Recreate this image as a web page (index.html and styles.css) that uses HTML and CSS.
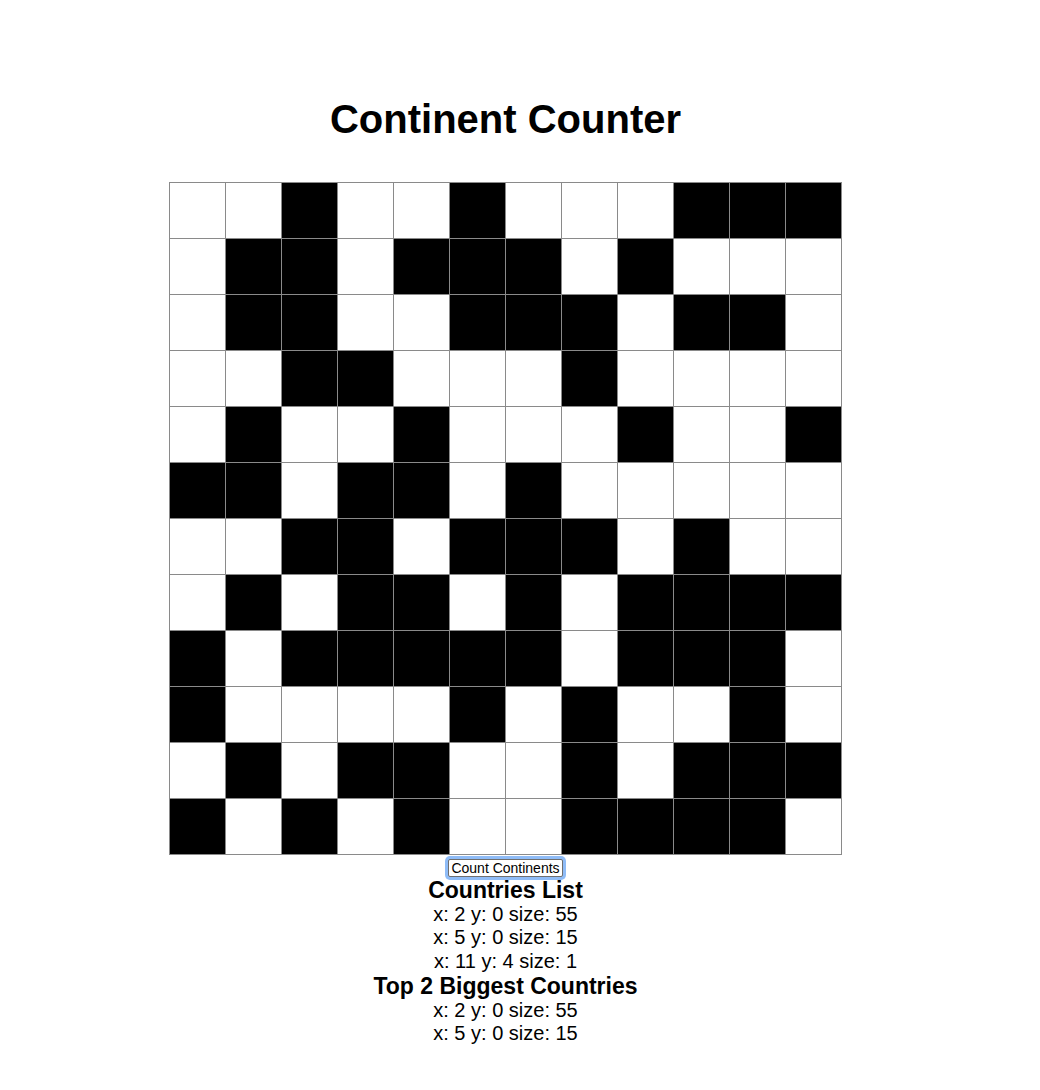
FILE: index.html
```html
<!DOCTYPE html>
<html>
<head>
<meta charset="utf-8">
<title>Continent Counter</title>
<link rel="stylesheet" href="styles.css">
</head>
<body>
<div class="page">
  <h1 class="title">Continent Counter</h1>
  <div class="board">
    <div class="cell"></div><div class="cell"></div><div class="cell on"></div><div class="cell"></div><div class="cell"></div><div class="cell on"></div><div class="cell"></div><div class="cell"></div><div class="cell"></div><div class="cell on"></div><div class="cell on"></div><div class="cell on"></div>
    <div class="cell"></div><div class="cell on"></div><div class="cell on"></div><div class="cell"></div><div class="cell on"></div><div class="cell on"></div><div class="cell on"></div><div class="cell"></div><div class="cell on"></div><div class="cell"></div><div class="cell"></div><div class="cell"></div>
    <div class="cell"></div><div class="cell on"></div><div class="cell on"></div><div class="cell"></div><div class="cell"></div><div class="cell on"></div><div class="cell on"></div><div class="cell on"></div><div class="cell"></div><div class="cell on"></div><div class="cell on"></div><div class="cell"></div>
    <div class="cell"></div><div class="cell"></div><div class="cell on"></div><div class="cell on"></div><div class="cell"></div><div class="cell"></div><div class="cell"></div><div class="cell on"></div><div class="cell"></div><div class="cell"></div><div class="cell"></div><div class="cell"></div>
    <div class="cell"></div><div class="cell on"></div><div class="cell"></div><div class="cell"></div><div class="cell on"></div><div class="cell"></div><div class="cell"></div><div class="cell"></div><div class="cell on"></div><div class="cell"></div><div class="cell"></div><div class="cell on"></div>
    <div class="cell on"></div><div class="cell on"></div><div class="cell"></div><div class="cell on"></div><div class="cell on"></div><div class="cell"></div><div class="cell on"></div><div class="cell"></div><div class="cell"></div><div class="cell"></div><div class="cell"></div><div class="cell"></div>
    <div class="cell"></div><div class="cell"></div><div class="cell on"></div><div class="cell on"></div><div class="cell"></div><div class="cell on"></div><div class="cell on"></div><div class="cell on"></div><div class="cell"></div><div class="cell on"></div><div class="cell"></div><div class="cell"></div>
    <div class="cell"></div><div class="cell on"></div><div class="cell"></div><div class="cell on"></div><div class="cell on"></div><div class="cell"></div><div class="cell on"></div><div class="cell"></div><div class="cell on"></div><div class="cell on"></div><div class="cell on"></div><div class="cell on"></div>
    <div class="cell on"></div><div class="cell"></div><div class="cell on"></div><div class="cell on"></div><div class="cell on"></div><div class="cell on"></div><div class="cell on"></div><div class="cell"></div><div class="cell on"></div><div class="cell on"></div><div class="cell on"></div><div class="cell"></div>
    <div class="cell on"></div><div class="cell"></div><div class="cell"></div><div class="cell"></div><div class="cell"></div><div class="cell on"></div><div class="cell"></div><div class="cell on"></div><div class="cell"></div><div class="cell"></div><div class="cell on"></div><div class="cell"></div>
    <div class="cell"></div><div class="cell on"></div><div class="cell"></div><div class="cell on"></div><div class="cell on"></div><div class="cell"></div><div class="cell"></div><div class="cell on"></div><div class="cell"></div><div class="cell on"></div><div class="cell on"></div><div class="cell on"></div>
    <div class="cell on"></div><div class="cell"></div><div class="cell on"></div><div class="cell"></div><div class="cell on"></div><div class="cell"></div><div class="cell"></div><div class="cell on"></div><div class="cell on"></div><div class="cell on"></div><div class="cell on"></div><div class="cell"></div>
  </div>
  <button class="count-btn" type="button">Count Continents</button>
  <h2 class="section-title">Countries List</h2>
  <div class="item">x: 2 y: 0 size: 55</div>
  <div class="item">x: 5 y: 0 size: 15</div>
  <div class="item">x: 11 y: 4 size: 1</div>
  <h2 class="section-title">Top 2 Biggest Countries</h2>
  <div class="item">x: 2 y: 0 size: 55</div>
  <div class="item">x: 5 y: 0 size: 15</div>
</div>
</body>
</html>
```

FILE: styles.css
```css
html, body {
  margin: 0;
  padding: 0;
  background: #ffffff;
}

body {
  font-family: "Liberation Sans", Arial, Helvetica, sans-serif;
  color: #000;
}

.page {
  width: 1011px;
  display: flex;
  flex-direction: column;
  align-items: center;
  text-align: center;
}

.title {
  font-size: 40px;
  line-height: 46px;
  font-weight: bold;
  margin: 96px 0 40px;
}

.board {
  display: grid;
  grid-template-columns: repeat(12, 55px);
  grid-auto-rows: 55px;
  gap: 1px;
  padding: 1px;
  background: #8a8a8a;
}

.cell {
  background: #ffffff;
}

.cell.on {
  background: #000000;
}

.count-btn {
  margin: 4px 0 0;
  font-family: "Liberation Sans", Arial, Helvetica, sans-serif;
  font-size: 14px;
  line-height: 16px;
  padding: 0 2px;
  background: #ffffff;
  color: #000;
  border: 1px solid #6f6f6f;
  border-radius: 2px;
  box-shadow: 0 0 0 3px #8fbcf7;
}

.section-title {
  font-size: 23px;
  line-height: 26px;
  font-weight: bold;
  margin: 0;
}

.item {
  font-size: 20px;
  line-height: 23.3px;
}
```
